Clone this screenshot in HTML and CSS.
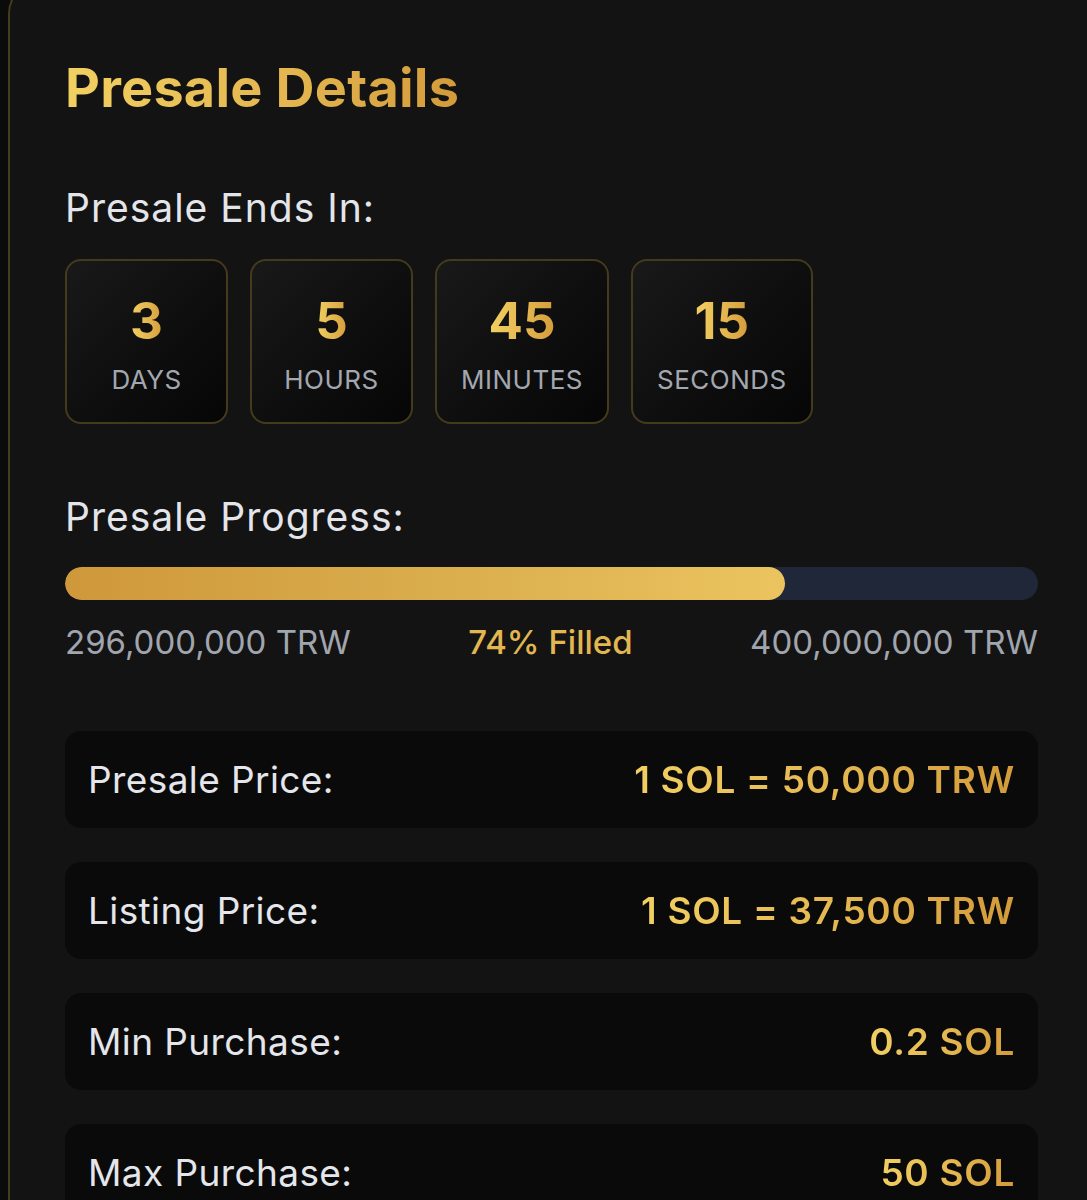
FILE: index.html
```html
<!DOCTYPE html>
<html lang="en">
<head>
<meta charset="utf-8">
<title>Presale Details</title>
<link rel="stylesheet" href="styles.css">
</head>
<body>
<div class="card">
  <h1 class="title gold-text">Presale Details</h1>

  <h2 class="section-label ends">Presale Ends In:</h2>
  <div class="countdown">
    <div class="unit"><span class="num gold-text">3</span><span class="unit-label">DAYS</span></div>
    <div class="unit"><span class="num gold-text">5</span><span class="unit-label">HOURS</span></div>
    <div class="unit"><span class="num gold-text">45</span><span class="unit-label">MINUTES</span></div>
    <div class="unit"><span class="num gold-text">15</span><span class="unit-label">SECONDS</span></div>
  </div>

  <h2 class="section-label progress-label">Presale Progress:</h2>
  <div class="bar"><div class="fill" style="width:74%"></div></div>
  <div class="bar-labels">
    <span class="muted">296,000,000 TRW</span>
    <span class="filled">74% Filled</span>
    <span class="muted">400,000,000 TRW</span>
  </div>

  <div class="rows">
    <div class="row"><span class="row-label">Presale Price:</span><span class="row-value gold-text">1 SOL = 50,000 TRW</span></div>
    <div class="row"><span class="row-label">Listing Price:</span><span class="row-value gold-text">1 SOL = 37,500 TRW</span></div>
    <div class="row"><span class="row-label">Min Purchase:</span><span class="row-value gold-text">0.2 SOL</span></div>
    <div class="row"><span class="row-label">Max Purchase:</span><span class="row-value gold-text">50 SOL</span></div>
  </div>
</div>
</body>
</html>
```

FILE: styles.css
```css
html, body {
  margin: 0;
  padding: 0;
  background: #0b0b0b;
  overflow: hidden;
  height: 1200px;
}

body {
  font-family: Inter, "Noto Sans", sans-serif;
  color: #e5e7eb;
}

.card {
  box-sizing: border-box;
  width: 1092px;
  margin: -20px 0 0 8px;
  padding: 73px 60px 40px 55px;
  background: #131313;
  border: 2px solid #463b1e;
  border-radius: 34px;
  min-height: 1400px;
}

.gold-text {
  background: linear-gradient(90deg, #f2d062 0%, #e2b44e 60%, #d39b3a 100%);
  -webkit-background-clip: text;
  background-clip: text;
  color: transparent;
}

.title {
  margin: 0;
  font-size: 54px;
  line-height: 66px;
  font-weight: 700;
  width: max-content;
  letter-spacing: 0.2px;
}

.section-label {
  margin: 0;
  font-size: 39px;
  line-height: 44px;
  font-weight: 400;
  color: #e3e5ea;
  letter-spacing: 1px;
}

.ends {
  margin-top: 65px;
}

.countdown {
  display: flex;
  gap: 22px;
  margin-top: 29px;
}

.unit {
  box-sizing: border-box;
  min-width: 163px;
  height: 165px;
  padding: 29px 24px 27px;
  display: flex;
  flex-direction: column;
  align-items: center;
  gap: 13px;
  border: 2px solid #463a1c;
  border-radius: 16px;
  background: linear-gradient(135deg, #191919 0%, #0e0e0e 55%, #060606 100%);
}

.num {
  font-size: 51px;
  line-height: 61px;
  font-weight: 700;
}

.unit-label {
  font-size: 26px;
  line-height: 31px;
  color: #a3a7b0;
  letter-spacing: 0.5px;
}

.progress-label {
  margin-top: 71px;
}

.bar {
  margin-top: 28px;
  height: 33px;
  border-radius: 17px;
  background: #1f2738;
  overflow: hidden;
}

.fill {
  height: 100%;
  border-radius: 17px;
  background: linear-gradient(90deg, #cf983a 0%, #d9ac4c 50%, #ebc45f 100%);
}

.bar-labels {
  margin-top: 22px;
  display: flex;
  justify-content: space-between;
  font-size: 33px;
  line-height: 40px;
}

.muted {
  color: #a0a5ae;
}

.filled {
  color: #e2b651;
  font-weight: 500;
}

.rows {
  margin-top: 69px;
  display: flex;
  flex-direction: column;
  gap: 34px;
}

.row {
  box-sizing: border-box;
  height: 97px;
  padding: 0 23px;
  display: flex;
  align-items: center;
  justify-content: space-between;
  background: #0a0a0a;
  border-radius: 16px;
}

.row-label {
  font-size: 37px;
  color: #e4e6eb;
  letter-spacing: 0.4px;
}

.row-value {
  font-size: 37px;
  font-weight: 600;
  letter-spacing: 0.7px;
}
```
